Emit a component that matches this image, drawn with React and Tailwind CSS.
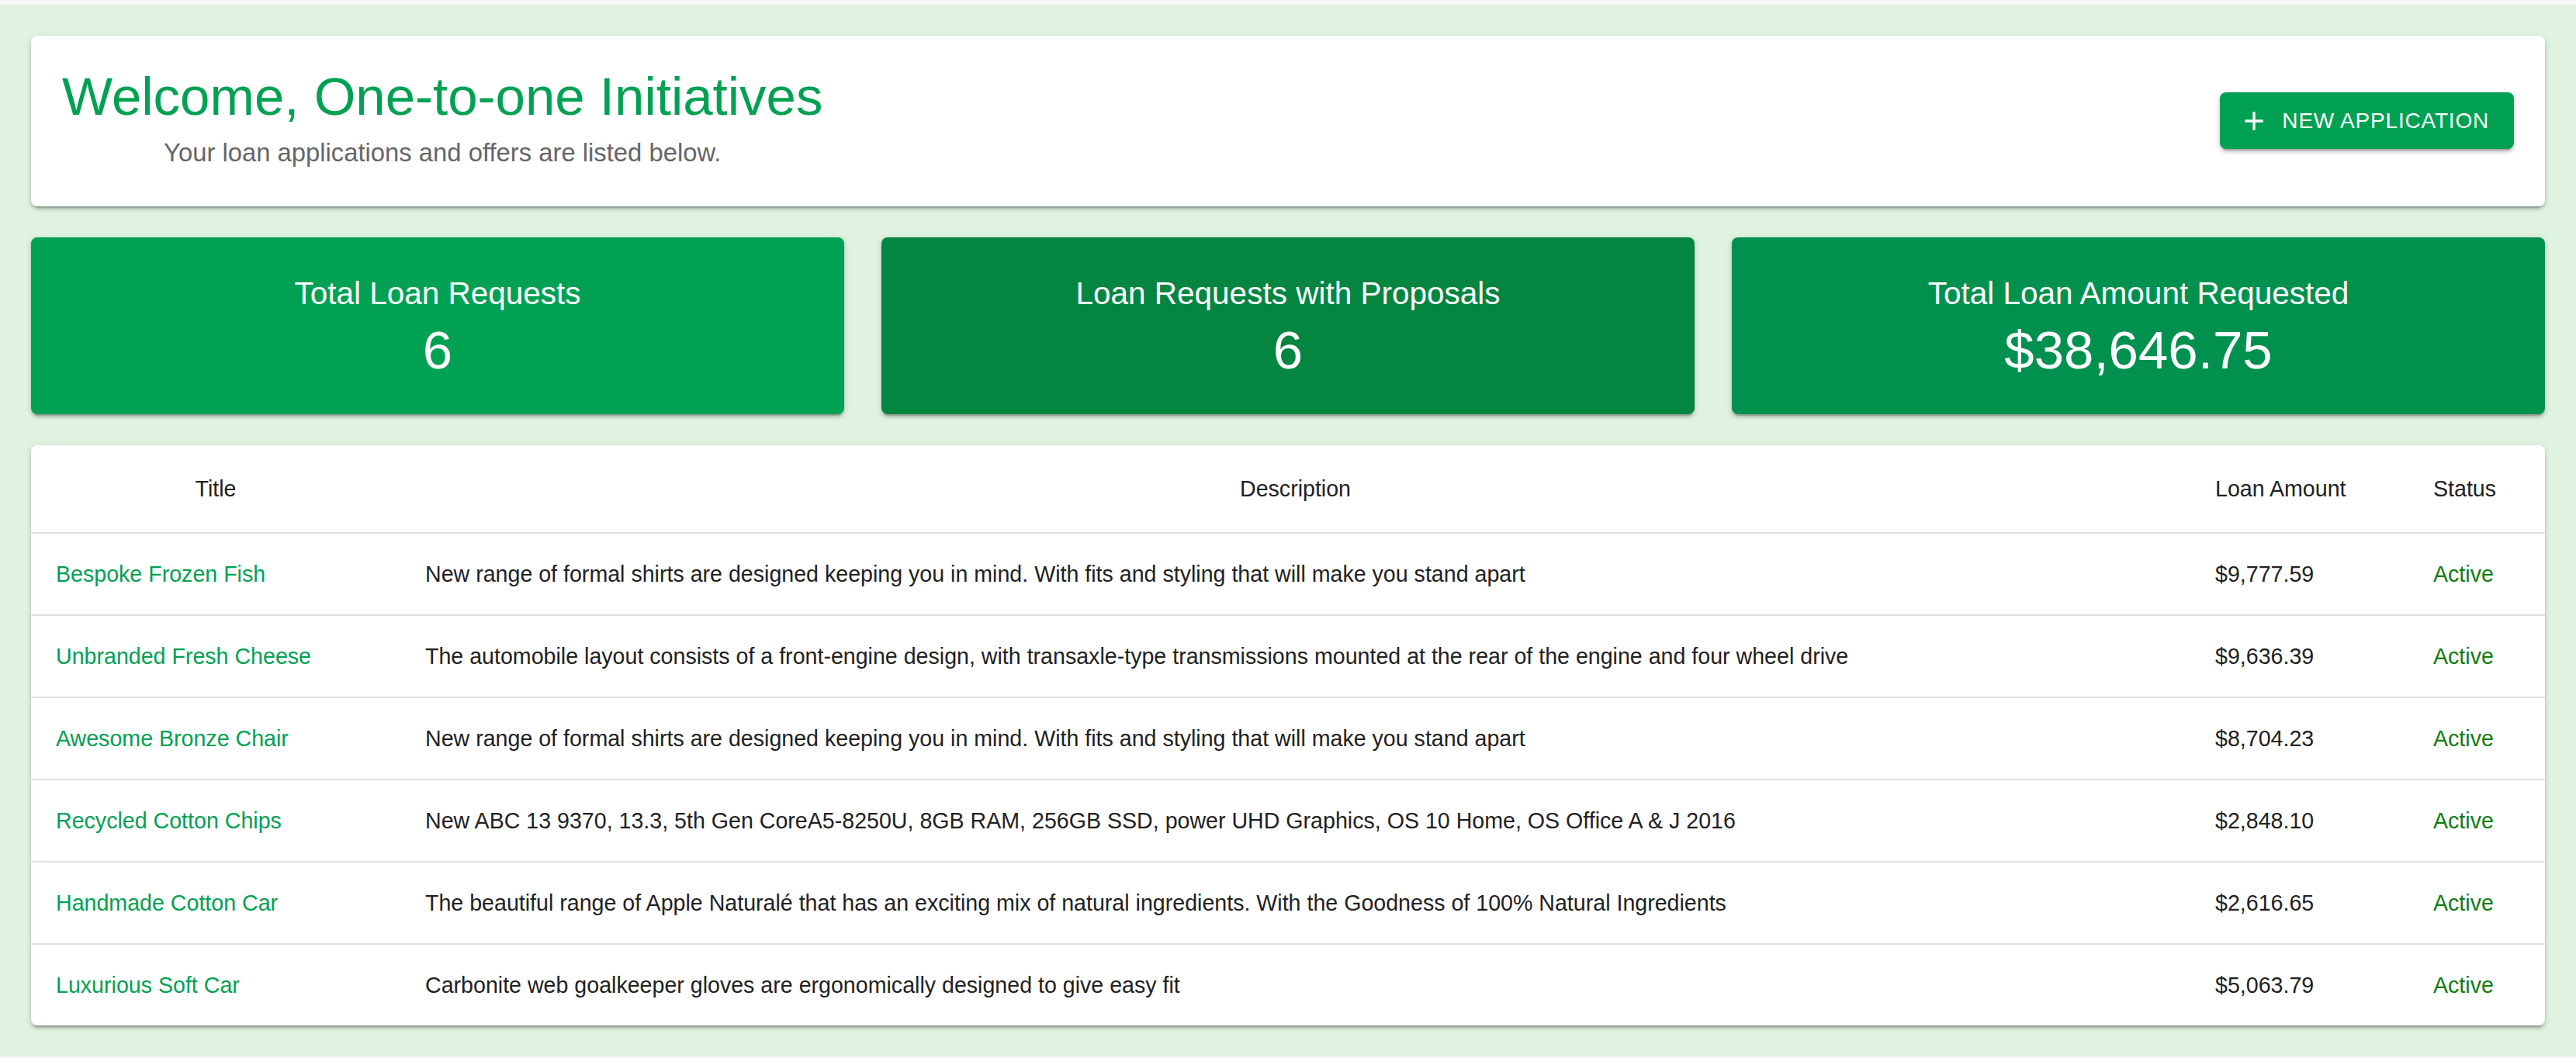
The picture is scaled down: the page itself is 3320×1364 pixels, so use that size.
import React from "react";

const rows = [
  { title: "Bespoke Frozen Fish", desc: "New range of formal shirts are designed keeping you in mind. With fits and styling that will make you stand apart", amount: "$9,777.59" },
  { title: "Unbranded Fresh Cheese", desc: "The automobile layout consists of a front-engine design, with transaxle-type transmissions mounted at the rear of the engine and four wheel drive", amount: "$9,636.39" },
  { title: "Awesome Bronze Chair", desc: "New range of formal shirts are designed keeping you in mind. With fits and styling that will make you stand apart", amount: "$8,704.23" },
  { title: "Recycled Cotton Chips", desc: "New ABC 13 9370, 13.3, 5th Gen CoreA5-8250U, 8GB RAM, 256GB SSD, power UHD Graphics, OS 10 Home, OS Office A & J 2016", amount: "$2,848.10" },
  { title: "Handmade Cotton Car", desc: "The beautiful range of Apple Naturalé that has an exciting mix of natural ingredients. With the Goodness of 100% Natural Ingredients", amount: "$2,616.65" },
  { title: "Luxurious Soft Car", desc: "Carbonite web goalkeeper gloves are ergonomically designed to give easy fit", amount: "$5,063.79" },
];

const stats = [
  { label: "Total Loan Requests", value: "6", bg: "bg-[#00a152]" },
  { label: "Loan Requests with Proposals", value: "6", bg: "bg-[#048540]" },
  { label: "Total Loan Amount Requested", value: "$38,646.75", bg: "bg-[#00914f]" },
];

const cardShadow =
  "shadow-[0_6px_2px_-4px_rgba(0,0,0,0.2),0_4px_4px_0_rgba(0,0,0,0.14),0_2px_10px_0_rgba(0,0,0,0.12)]";

export default function App() {
  return (
    <div
      className="min-h-screen bg-[#f5f6f8] pt-[6px]"
      style={{ fontFamily: '"Liberation Sans", Arial, sans-serif' }}
    >
      <div className="flex flex-col gap-[40px] bg-[#dff3e0] p-[40px]">
        {/* Header card */}
        <div
          className={`flex items-start justify-between rounded-[8px] bg-white pb-[45px] pl-[40px] pr-[40px] pt-[37px] ${cardShadow}`}
        >
          <div className="inline-flex flex-col items-center">
            <h1 className="text-[69px] font-normal leading-[84px] text-[#00a152]">
              Welcome, One-to-one Initiatives
            </h1>
            <p className="mt-[6px] text-[32.8px] leading-[48px] text-[#666666]">
              Your loan applications and offers are listed below.
            </p>
          </div>
          <button
            className={`mt-[36px] flex h-[73px] items-center gap-[16px] rounded-[8px] bg-[#00a152] pl-[24px] pr-[32px] text-white ${cardShadow}`}
          >
            <svg width="40" height="40" viewBox="0 0 24 24" fill="currentColor">
              <path d="M19 13h-6v6h-2v-6H5v-2h6V5h2v6h6v2z" />
            </svg>
            <span className="text-[28px] font-medium uppercase leading-[49px] tracking-[0.8px]">
              New Application
            </span>
          </button>
        </div>

        {/* Stats */}
        <div className="grid grid-cols-3 gap-[48px]">
          {stats.map((s) => (
            <div
              key={s.label}
              className={`${s.bg} rounded-[8px] p-[40px] text-center text-white ${cardShadow}`}
            >
              <div className="text-[40.5px] font-medium leading-[64px]">{s.label}</div>
              <div className="text-[69px] leading-[84px]">{s.value}</div>
            </div>
          ))}
        </div>

        {/* Table */}
        <div className={`overflow-hidden rounded-[8px] bg-white ${cardShadow}`}>
          <div className="grid grid-cols-[476px_2307px_281px_176px] border-b-2 border-[#e0e0e0] text-[28.6px] font-medium leading-[48px] text-[#212121]">
            <div className="px-[32px] py-[32px] text-center">Title</div>
            <div className="px-[32px] py-[32px] text-center">Description</div>
            <div className="px-[32px] py-[32px] text-left">Loan Amount</div>
            <div className="px-[32px] py-[32px] text-left">Status</div>
          </div>
          {rows.map((r, i) => (
            <div
              key={r.title}
              className={`grid grid-cols-[476px_2307px_281px_176px] text-[28.6px] leading-[40px] text-[#212121] ${
                i < rows.length - 1 ? "border-b-2 border-[#e0e0e0]" : ""
              }`}
            >
              <div className="px-[32px] py-[32px] text-[#00a152]">{r.title}</div>
              <div className="px-[32px] py-[32px]">{r.desc}</div>
              <div className="px-[32px] py-[32px]">{r.amount}</div>
              <div className="px-[32px] py-[32px] text-[#107c10]">Active</div>
            </div>
          ))}
        </div>
      </div>
    </div>
  );
}
